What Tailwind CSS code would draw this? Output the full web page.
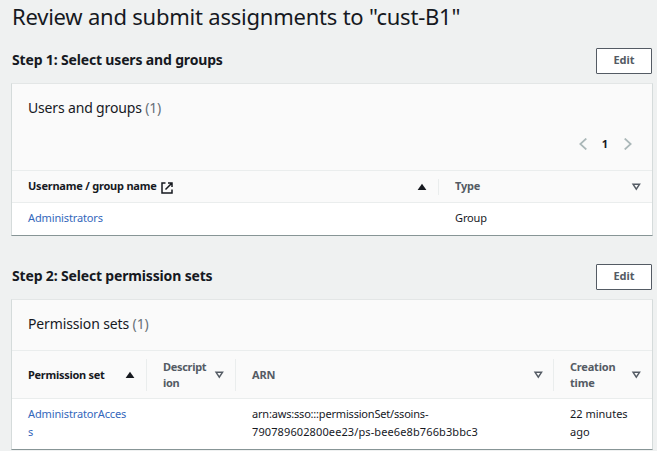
<!DOCTYPE html>
<html lang="en">
<head>
<meta charset="utf-8">
<title>Review and submit assignments</title>
<script src="https://cdn.jsdelivr.net/npm/@tailwindcss/browser@4"></script>
</head>
<body class="h-[451px] overflow-hidden bg-[#eff1f1] pl-[11px] pr-1 font-['Noto_Sans',sans-serif] text-[11px] text-[#16191f]">
<svg class="hidden">
  <symbol id="up" viewBox="0 0 10 8"><path d="M5 .7 9.400 7H.6z" fill="currentColor"/></symbol>
  <symbol id="down" viewBox="0 0 10 8"><path d="M2.100 1.300h6.400L5.300 6.200z" fill="none" stroke="currentColor" stroke-width="1.5"/></symbol>
</svg>

<h1 class="h-[35px] whitespace-nowrap pl-px text-[22px] leading-[33px] tracking-[-0.22px]">Review and submit assignments to "cust-B1"</h1>

<section>
  <header class="flex h-12 items-start justify-between pl-px pr-px pt-[13px]">
    <h2 class="text-[14px] font-bold leading-6 tracking-[-0.16px]">Step 1: Select users and groups</h2>
    <button class="h-[26px] w-14 rounded-[1px] border border-[#545b64] bg-white pb-0.5 text-[11px] font-bold text-[#545b64]">Edit</button>
  </header>
  <div class="h-[153px] border border-[#d5dbdb] border-t-[#e3e6e6] border-b-[#879596] bg-[#fafafa]">
    <div class="h-[86px] pl-4 pr-5 pt-3">
      <h3 class="text-[14px] leading-6 tracking-[-0.16px]">Users and groups <span class="text-[#687078]">(1)</span></h3>
      <nav class="mt-3 flex h-6 items-center justify-end gap-[14px]">
        <svg class="h-3 w-2 text-[#aab7b8]" viewBox="0 0 8 12"><path d="M7.300 .5 1.300 6l6 5.500" fill="none" stroke="currentColor" stroke-width="1.7"/></svg>
        <b class="w-2 text-center">1</b>
        <svg class="ml-px h-3 w-2 text-[#aab7b8]" viewBox="0 0 8 12"><path d="m.7.5 6 5.500-6 5.500" fill="none" stroke="currentColor" stroke-width="1.7"/></svg>
      </nav>
    </div>
    <div class="grid h-[33px] grid-cols-[427px_1fr] items-center border-y border-[#eaeded] font-bold">
      <div class="flex h-4 items-center border-r border-[#eaeded] pl-4 pr-[11px]">
        <span class="tracking-[-0.22px]">Username / group name</span>
        <svg class="ml-1 mt-0.5 size-3" viewBox="0 0 12 12" fill="none" stroke="currentColor" stroke-width="1.5"><path d="M4.500 1H1v10h10V7.500M7 1h4v4M11 1 4.500 7.500"/></svg>
        <svg class="ml-auto h-2 w-2.5"><use href="#up"/></svg>
      </div>
      <div class="flex items-center justify-between pl-4 pr-[11px] tracking-[-0.2px] text-[#545b64]"><span>Type</span><svg class="h-2 w-2.5"><use href="#down"/></svg></div>
    </div>
    <div class="grid h-8 grid-cols-[427px_1fr] items-center bg-white pb-0.5 tracking-[-0.13px]">
      <a class="pl-4 text-[#3467bb]">Administrators</a><span class="pl-4">Group</span>
    </div>
  </div>
</section>

<section class="mt-[15px]">
  <header class="flex h-12 items-start justify-between pl-px pr-px pt-[13px]">
    <h2 class="text-[14px] font-bold leading-6 tracking-[-0.16px]">Step 2: Select permission sets</h2>
    <button class="h-[26px] w-14 rounded-[1px] border border-[#545b64] bg-white pb-0.5 text-[11px] font-bold text-[#545b64]">Edit</button>
  </header>
  <div class="h-[151px] border border-[#d5dbdb] border-t-[#e3e6e6] border-b-[#879596] bg-[#fafafa]">
    <div class="h-[50px] pl-4 pt-3"><h3 class="text-[14px] leading-6 tracking-[-0.13px]">Permission sets <span class="text-[#687078]">(1)</span></h3></div>
    <div class="grid h-[49px] grid-cols-[135px_89px_318px_1fr] items-center border-y border-[#eaeded] font-bold leading-4 text-[#545b64]">
      <div class="flex h-8 items-center justify-between border-r border-[#eaeded] pl-4 pr-[11px] text-[#16191f]"><span class="tracking-[-0.28px]">Permission set</span><svg class="h-2 w-2.5"><use href="#up"/></svg></div>
      <div class="flex h-8 items-center justify-between border-r border-[#eaeded] pl-4 pr-[11px]"><span class="tracking-[-0.3px]">Descript<br>ion</span><svg class="h-2 w-2.5"><use href="#down"/></svg></div>
      <div class="flex h-8 items-center justify-between border-r border-[#eaeded] pl-4 pr-[10px]"><span class="tracking-[-0.2px]">ARN</span><svg class="h-2 w-2.5"><use href="#down"/></svg></div>
      <div class="flex h-8 items-center justify-between pl-4 pr-[11px]"><span class="tracking-[-0.2px]">Creation<br>time</span><svg class="h-2 w-2.5"><use href="#down"/></svg></div>
    </div>
    <div class="grid h-[50px] grid-cols-[135px_89px_318px_1fr] items-center bg-white pb-0.5 leading-[18px]">
      <a class="pl-4 tracking-[-0.13px] text-[#3467bb]">AdministratorAcces<br>s</a><span></span>
      <span class="pl-4"><span class="tracking-[-0.19px]">arn:aws:sso:::permissionSet/ssoins-</span><br><span class="tracking-[0.11px]">790789602800ee23/ps-bee6e8b766b3bbc3</span></span>
      <span class="pl-4">22 minutes<br>ago</span>
    </div>
  </div>
</section>
</body>
</html>
